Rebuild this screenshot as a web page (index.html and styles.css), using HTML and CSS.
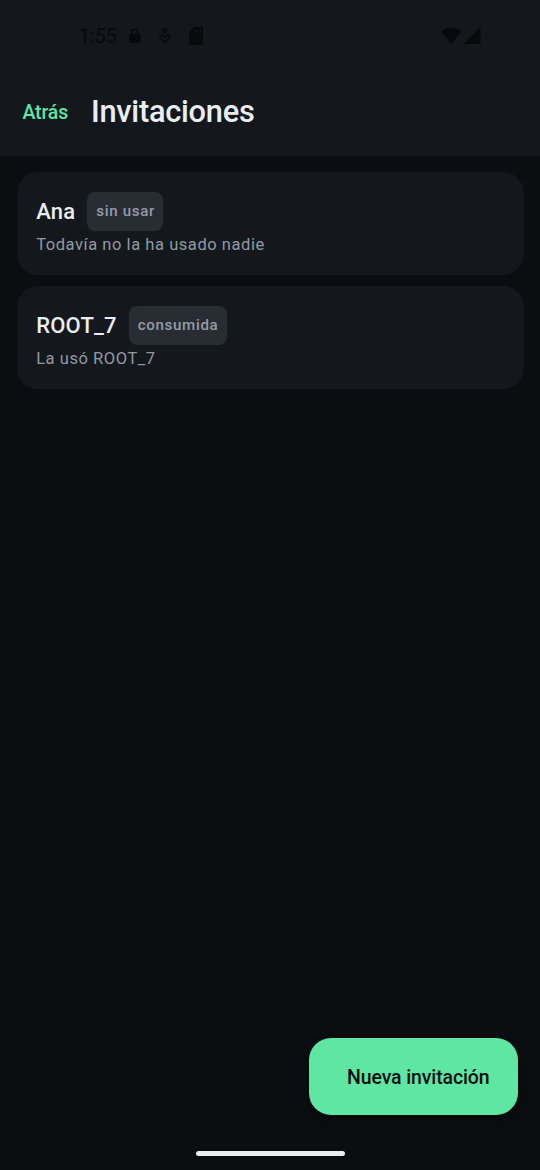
FILE: index.html
```html
<!DOCTYPE html>
<html lang="es">
<head>
<meta charset="utf-8">
<title>Invitaciones</title>
<link rel="stylesheet" href="styles.css">
</head>
<body>
<div class="screen">
  <header class="header">
    <div class="status">
      <span class="clock">1:55</span>
      <svg class="lock" width="12" height="16" viewBox="0 0 12 16"><path fill="currentColor" fill-rule="evenodd" d="M1.500 6H2.200V4.300a3.600 3.600 0 0 1 7.200 0V6h.8A1.300 1.300 0 0 1 11.500 7.300v6.200a1.300 1.300 0 0 1-1.300 1.300h-8.700A1.300 1.300 0 0 1 .2 13.500V7.300A1.300 1.300 0 0 1 1.500 6zM3.800 6h4V4.300a2 2 0 0 0-4 0z"/></svg>
      <svg class="heart" width="12" height="16" viewBox="0 0 12 16" fill="none" stroke="currentColor" stroke-width="1.500"><circle cx="6" cy="2.900" r="1.900"/><path d="M6 14.300L1.700 10.300Q0 8.300 2 7.100 4.500 6.300 6 9.200 7.500 6.300 10 7.100 12 8.300 10.300 10.300z"/></svg>
      <svg class="sd" width="14" height="18" viewBox="0 0 14 18"><path fill="currentColor" fill-rule="evenodd" d="M5 0h7.500A1.500 1.500 0 0 1 14 1.500v15a1.500 1.500 0 0 1-1.500 1.500h-11A1.500 1.500 0 0 1 0 16.500V5zM5 2.500v3h1.500v-3zM7.800 2.500v3h1.500v-3zM10.600 2.500v3h1.500v-3z"/></svg>
      <svg class="signals" width="40" height="18" viewBox="0 0 40 18"><path fill="currentColor" d="M0 4.300Q10-3.500 20.500 4.300L10.300 17zM39.500 0v17H22.300z"/></svg>
    </div>
    <div class="bar"><a class="back">Atrás</a><h1 class="title">Invitaciones</h1></div>
  </header>
  <main class="list">
    <section class="card"><div class="row"><span class="name">Ana</span><span class="tag">sin usar</span></div><p class="note">Todavía no la ha usado nadie</p></section>
    <section class="card"><div class="row"><span class="name">ROOT_7</span><span class="tag">consumida</span></div><p class="note">La usó ROOT_7</p></section>
  </main>
  <footer class="footer"><button class="fab">Nueva invitación</button><div class="handle"></div></footer>
</div>
</body>
</html>
```
FILE: styles.css
```css
* { box-sizing: border-box; }
body { margin: 0; background: #0a0e11; font-family: Roboto, sans-serif; }
.screen { width: 540px; height: 1170px; display: flex; flex-direction: column; color: #e9eef4; }
.header { height: 156px; background: #14181c; }
.status { height: 72px; padding: 0 59px 0 79px; display: flex; align-items: center; color: #07090b; }
.clock { font-size: 19.5px; line-height: 24px; width: 50px; padding-top: 1px; }
.heart { margin-left: 18px; }
.sd { margin-left: 18px; }
.signals { margin-left: auto; }
.bar { display: flex; align-items: center; height: 80px; padding-left: 22.5px; }
.back { width: 68.5px; padding-top: 2px; color: #5fe6a3; font-size: 19.5px; line-height: 24px; font-weight: 500; letter-spacing: -.15px; }
.title { margin: 0; font-size: 30.75px; font-weight: 550; line-height: 36px; letter-spacing: -.25px; }
.list { flex: 1; padding: 16px 16.5px 0; display: flex; flex-direction: column; gap: 11px; }
.card { height: 103px; border-radius: 21px; background: #14181c; padding: 20px 19.7px; }
.row { display: flex; align-items: center; gap: 12px; height: 39px; }
.name { font-size: 22px; font-weight: 500; letter-spacing: .2px; }
.tag { height: 39px; line-height: 39px; padding: 0 8.400px 0 9px; border-radius: 8px; background: #282c33; color: #949ca7; font-size: 15.125px; font-weight: 500; letter-spacing: .65px; }
.note { margin: 4px 0 0; font-size: 16.5px; line-height: 20px; letter-spacing: .55px; color: #919aa3; }
.footer { height: 132px; padding: 0 22px; display: flex; flex-direction: column; }
.fab { align-self: flex-end; width: 209.5px; height: 77px; border: 0; border-radius: 22px; padding: 2px 28px 0 38px; background: #5fe6a3; color: #0a0e11; font: 500 19.5px Roboto, sans-serif; letter-spacing: -.12px; white-space: nowrap; box-shadow: 0 5px 9px #0005; }
.handle { align-self: center; width: 149px; height: 5px; border-radius: 3px; background: #ececec; margin-top: 36px; }
```
